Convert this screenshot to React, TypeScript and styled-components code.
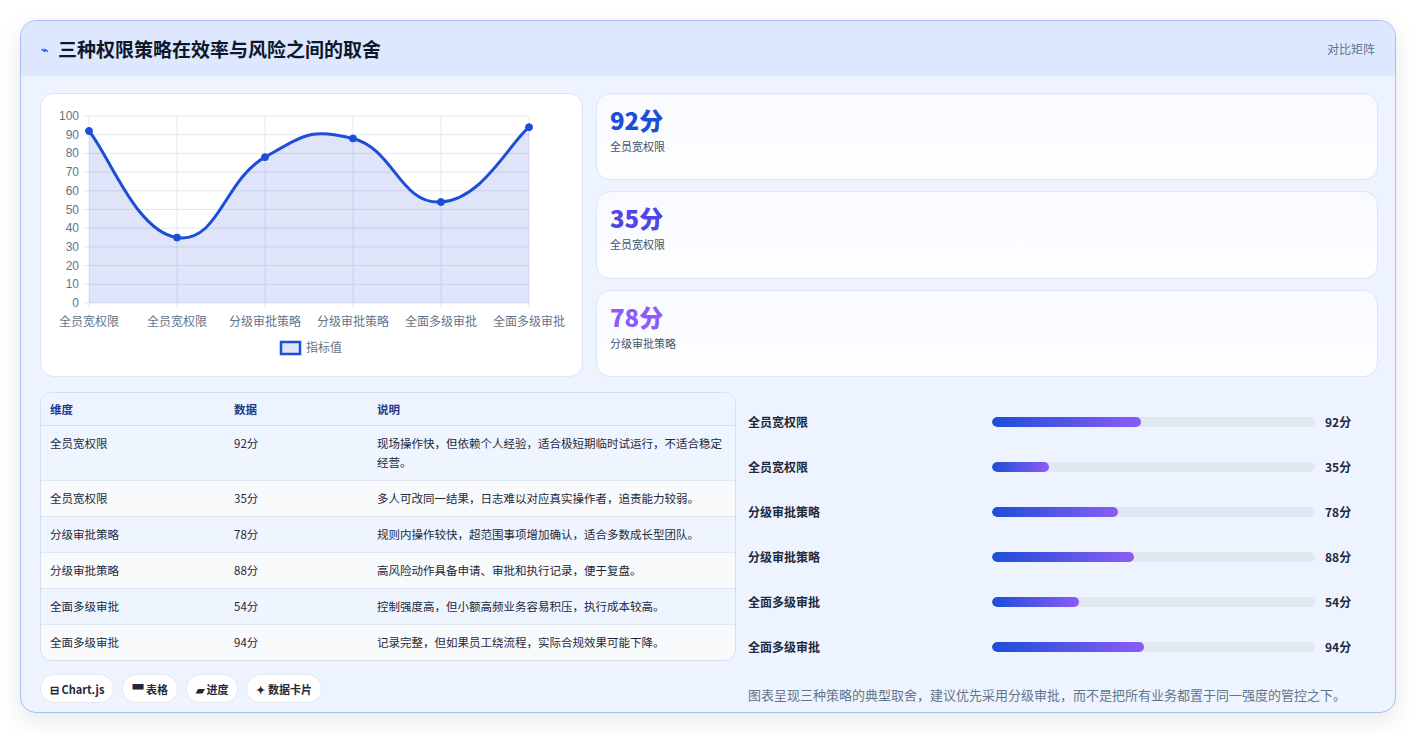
import React from "react";
import styled, { createGlobalStyle } from "styled-components";

const Global = createGlobalStyle`
  html, body { margin: 0; padding: 0; background: #ffffff; }
  body { font-family: "Noto Sans CJK SC", "Noto Sans", sans-serif; color: #1e293b; }
`;

const Page = styled.div`padding: 20px 20px 20px 20px; width: 1417px; box-sizing: border-box;`;
const Card = styled.div`
  width: 1376px; height: 693px; box-sizing: border-box;
  border: 1px solid #a9bdf0; border-radius: 16px; overflow: hidden;
  background: #eef4ff; box-shadow: 0 8px 24px rgba(30,41,90,0.10);
  display: flex; flex-direction: column;
`;
const Header = styled.div`
  height: 55px; flex: none; background: #dde8fe; display: flex; align-items: center;
  justify-content: space-between; padding: 0 20px;
`;
const Title = styled.h1`
  margin: 0; font-size: 19px; font-weight: 700; color: #0f172a; display: flex; align-items: center; gap: 10px;
`;
const Spark = styled.span`color: #2563eb; font-size: 12px;`;
const Tag = styled.span`font-size: 12px; color: #64748b;`;
const Body = styled.div`padding: 17px 19px 0 19px; display: flex; flex-direction: column;`;
const TopRow = styled.div`display: grid; grid-template-columns: 543px 782px; gap: 13px; height: 284px;`;
const ChartCard = styled.div`
  background: #fff; border: 1px solid #dde5f3; border-radius: 14px; overflow: hidden;
`;
const Stats = styled.div`display: flex; flex-direction: column; gap: 11px;`;
const Stat = styled.div`
  flex: 1; background: linear-gradient(180deg, #f8faff, #fdfeff); border: 1px solid #dde5f3; border-radius: 14px;
  padding: 10px 13px; display: flex; flex-direction: column;
`;
const StatValue = styled.div<{ $c: string }>`font-size: 24px; font-weight: 800; color: ${p => p.$c}; line-height: 32px;`;
const StatLabel = styled.div`font-size: 11px; color: #475569; margin-top: 2px;`;
const BottomRow = styled.div`display: grid; grid-template-columns: 696px 1fr; gap: 12px; margin-top: 15px;`;
const Left = styled.div`display: flex; flex-direction: column;`;
const Table = styled.table`
  width: 100%; border-collapse: separate; border-spacing: 0; font-size: 11.5px;
  border: 1px solid #d3def2; border-radius: 12px; overflow: hidden; background: #fff;
`;
const Th = styled.th<{ $w?: number }>`
  text-align: left; font-weight: 700; color: #1e3a8a; padding: 0 9px; height: 32px;
  background: #eef4ff; border-bottom: 1px solid #d3def2; ${p => p.$w ? `width:${p.$w}px;` : ""}
`;
const Tr = styled.tr<{ $alt: boolean }>`background: ${p => p.$alt ? "#f8fafc" : "#eff5ff"};`;
const Td = styled.td<{ $last: boolean }>`
  padding: 8px 9px; vertical-align: top; color: #1e293b; line-height: 19px;
  ${p => p.$last ? "" : "border-bottom: 1px solid #dfe7f3;"}
`;
const Pills = styled.div`display: flex; gap: 8px; margin-top: 13px;`;
const Pill = styled.span`
  height: 27px; padding: 0 9px; display: inline-flex; align-items: center; font-size: 11px; font-weight: 600;
  background: #fff; border: 1px solid #e2e8f0; border-radius: 14px; color: #1e293b; gap: 3px;
`;
const Right = styled.div`display: flex; flex-direction: column; padding-top: 7px;`;
const PRow = styled.div`display: grid; grid-template-columns: 234px 323px 1fr; align-items: center; height: 45px; column-gap: 10px;`;
const PLabel = styled.span`font-size: 12px; font-weight: 600; color: #1e293b;`;
const Track = styled.div`height: 10px; background: #e2e8f0; border-radius: 5px; overflow: hidden;`;
const Fill = styled.div`height: 100%; border-radius: 5px; background: linear-gradient(90deg, #1d4ed8, #8b5cf6);`;
const PValue = styled.span`font-size: 12px; font-weight: 700; color: #1e293b;`;
const Note = styled.p`margin: 16px 0 0; font-size: 13px; color: #64748b;`;

const rows = [
  ["全员宽权限", 92, "现场操作快，但依赖个人经验，适合极短期临时试运行，不适合稳定经营。"],
  ["全员宽权限", 35, "多人可改同一结果，日志难以对应真实操作者，追责能力较弱。"],
  ["分级审批策略", 78, "规则内操作较快，超范围事项增加确认，适合多数成长型团队。"],
  ["分级审批策略", 88, "高风险动作具备申请、审批和执行记录，便于复盘。"],
  ["全面多级审批", 54, "控制强度高，但小额高频业务容易积压，执行成本较高。"],
  ["全面多级审批", 94, "记录完整，但如果员工绕流程，实际合规效果可能下降。"],
] as const;

function Chart() {
  const x0 = 48, x1 = 488, yb = 209, yt = 22;
  const sy = (v: number) => yb - (v / 100) * (yb - yt);
  const pts = rows.map((r, i) => [x0 + i * 88, sy(r[1] as number)]);
  let d = `M${pts[0][0]},${pts[0][1]}`;
  for (let i = 0; i < pts.length - 1; i++) {
    const p0 = pts[i - 1] || pts[i], p1 = pts[i], p2 = pts[i + 1], p3 = pts[i + 2] || p2;
    const t = 0.35;
    const c1 = [p1[0] + (p2[0] - p0[0]) * t / 1.5, p1[1] + (p2[1] - p0[1]) * t / 1.5];
    const c2 = [p2[0] - (p3[0] - p1[0]) * t / 1.5, p2[1] - (p3[1] - p1[1]) * t / 1.5];
    d += ` C${c1[0]},${c1[1]} ${c2[0]},${c2[1]} ${p2[0]},${p2[1]}`;
  }
  const area = `${d} L${x1},${yb} L${x0},${yb} Z`;
  return (
    <svg width="543" height="284" viewBox="0 0 543 284">
      {Array.from({ length: 11 }, (_, i) => {
        const y = sy(i * 10);
        return (
          <g key={i}>
            <line x1={x0 - 6} x2={x1} y1={y} y2={y} stroke="#e3e8f0" />
            <text x={x0 - 10} y={y + 4} fontSize="12" textAnchor="end" fill="#64748b" fontFamily="Liberation Sans, sans-serif">{i * 10}</text>
          </g>
        );
      })}
      {pts.map((p, i) => <line key={i} x1={p[0]} x2={p[0]} y1={yt} y2={yb + 5} stroke="#e3e8f0" />)}
      <path d={area} fill="rgba(37,71,209,0.15)" />
      <path d={d} fill="none" stroke="#1d4ed8" strokeWidth="3" />
      {pts.map((p, i) => <circle key={i} cx={p[0]} cy={p[1]} r="3.5" fill="#1d4ed8" stroke="#1d4ed8" strokeWidth="1" />)}
      {rows.map((r, i) => (
        <text key={i} x={x0 + i * 88} y={232} fontSize="12" textAnchor="middle" fill="#64748b" fontFamily="Noto Sans CJK SC, sans-serif">{r[0]}</text>
      ))}
      <rect x={240} y={248} width={19} height={12} fill="rgba(37,71,209,0.15)" stroke="#1d4ed8" strokeWidth="2.5" />
      <text x={265} y={258} fontSize="12" fill="#64748b" fontFamily="Noto Sans CJK SC, sans-serif">指标值</text>
    </svg>
  );
}

export default function App() {
  return (
    <Page>
      <Global />
      <Card>
        <Header>
          <Title><Spark>⌁</Spark>三种权限策略在效率与风险之间的取舍</Title>
          <Tag>对比矩阵</Tag>
        </Header>
        <Body>
          <TopRow>
            <ChartCard><Chart /></ChartCard>
            <Stats>
              <Stat><StatValue $c="#1d4ed8">92分</StatValue><StatLabel>全员宽权限</StatLabel></Stat>
              <Stat><StatValue $c="#4f46e5">35分</StatValue><StatLabel>全员宽权限</StatLabel></Stat>
              <Stat><StatValue $c="#8b5cf6">78分</StatValue><StatLabel>分级审批策略</StatLabel></Stat>
            </Stats>
          </TopRow>
          <BottomRow>
            <Left>
              <Table>
                <thead><tr><Th $w={166}>维度</Th><Th $w={125}>数据</Th><Th>说明</Th></tr></thead>
                <tbody>
                  {rows.map((r, i) => (
                    <Tr key={i} $alt={i % 2 === 1}>
                      <Td $last={i === rows.length - 1}>{r[0]}</Td>
                      <Td $last={i === rows.length - 1}>{r[1]}分</Td>
                      <Td $last={i === rows.length - 1}>{r[2]}</Td>
                    </Tr>
                  ))}
                </tbody>
              </Table>
              <Pills>
                <Pill>⊟ Chart.js</Pill>
                <Pill>▀ 表格</Pill>
                <Pill>▰ 进度</Pill>
                <Pill>✦ 数据卡片</Pill>
              </Pills>
            </Left>
            <Right>
              {rows.map((r, i) => (
                <PRow key={i}>
                  <PLabel>{r[0]}</PLabel>
                  <Track><Fill style={{ width: `${(r[1] as number) / 2}%` }} /></Track>
                  <PValue>{r[1]}分</PValue>
                </PRow>
              ))}
              <Note>图表呈现三种策略的典型取舍，建议优先采用分级审批，而不是把所有业务都置于同一强度的管控之下。</Note>
            </Right>
          </BottomRow>
        </Body>
      </Card>
    </Page>
  );
}
